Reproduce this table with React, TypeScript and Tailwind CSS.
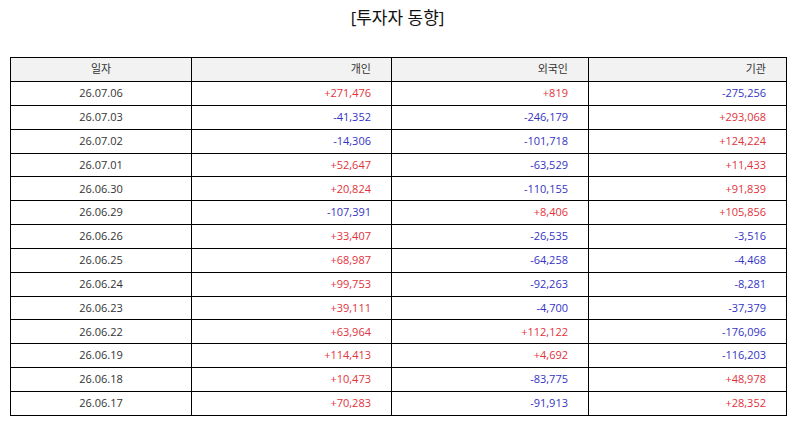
import React from "react";

const rows: [string, string, string, string][] = [
  ["26.07.06", "+271,476", "+819", "-275,256"],
  ["26.07.03", "-41,352", "-246,179", "+293,068"],
  ["26.07.02", "-14,306", "-101,718", "+124,224"],
  ["26.07.01", "+52,647", "-63,529", "+11,433"],
  ["26.06.30", "+20,824", "-110,155", "+91,839"],
  ["26.06.29", "-107,391", "+8,406", "+105,856"],
  ["26.06.26", "+33,407", "-26,535", "-3,516"],
  ["26.06.25", "+68,987", "-64,258", "-4,468"],
  ["26.06.24", "+99,753", "-92,263", "-8,281"],
  ["26.06.23", "+39,111", "-4,700", "-37,379"],
  ["26.06.22", "+63,964", "+112,122", "-176,096"],
  ["26.06.19", "+114,413", "+4,692", "-116,203"],
  ["26.06.18", "+10,473", "-83,775", "+48,978"],
  ["26.06.17", "+70,283", "-91,913", "+28,352"],
];

function Num({ v }: { v: string }) {
  const cls = v.startsWith("-") ? "text-[#3333c4]" : "text-[#e2323c]";
  return (
    <td className={`border border-black text-right pr-[20px] ${cls}`}>{v}</td>
  );
}

export default function App() {
  return (
    <div
      className="w-[795px] h-[425px] bg-white text-[#333]"
      style={{ fontFamily: '"Open Sans", "Noto Sans CJK KR", sans-serif' }}
    >
      <div className="pt-[6px] h-[57px] text-center text-[17px] leading-[24px] text-[#111]">
        [투자자 동향]
      </div>
      <table className="ml-[10px] w-[776px] border-collapse text-[11px] table-fixed">
        <colgroup>
          <col className="w-[181px]" />
          <col className="w-[200px]" />
          <col className="w-[197px]" />
          <col className="w-[198px]" />
        </colgroup>
        <thead>
          <tr className="h-[24px] bg-[#f2f2f2]">
            <th className="border border-black font-normal text-center">일자</th>
            <th className="border border-black font-normal text-right pr-[20px]">개인</th>
            <th className="border border-black font-normal text-right pr-[20px]">외국인</th>
            <th className="border border-black font-normal text-right pr-[20px]">기관</th>
          </tr>
        </thead>
        <tbody>
          {rows.map((r) => (
            <tr key={r[0]} className="h-[23.85px]">
              <td className="border border-black text-center">{r[0]}</td>
              <Num v={r[1]} />
              <Num v={r[2]} />
              <Num v={r[3]} />
            </tr>
          ))}
        </tbody>
      </table>
    </div>
  );
}
